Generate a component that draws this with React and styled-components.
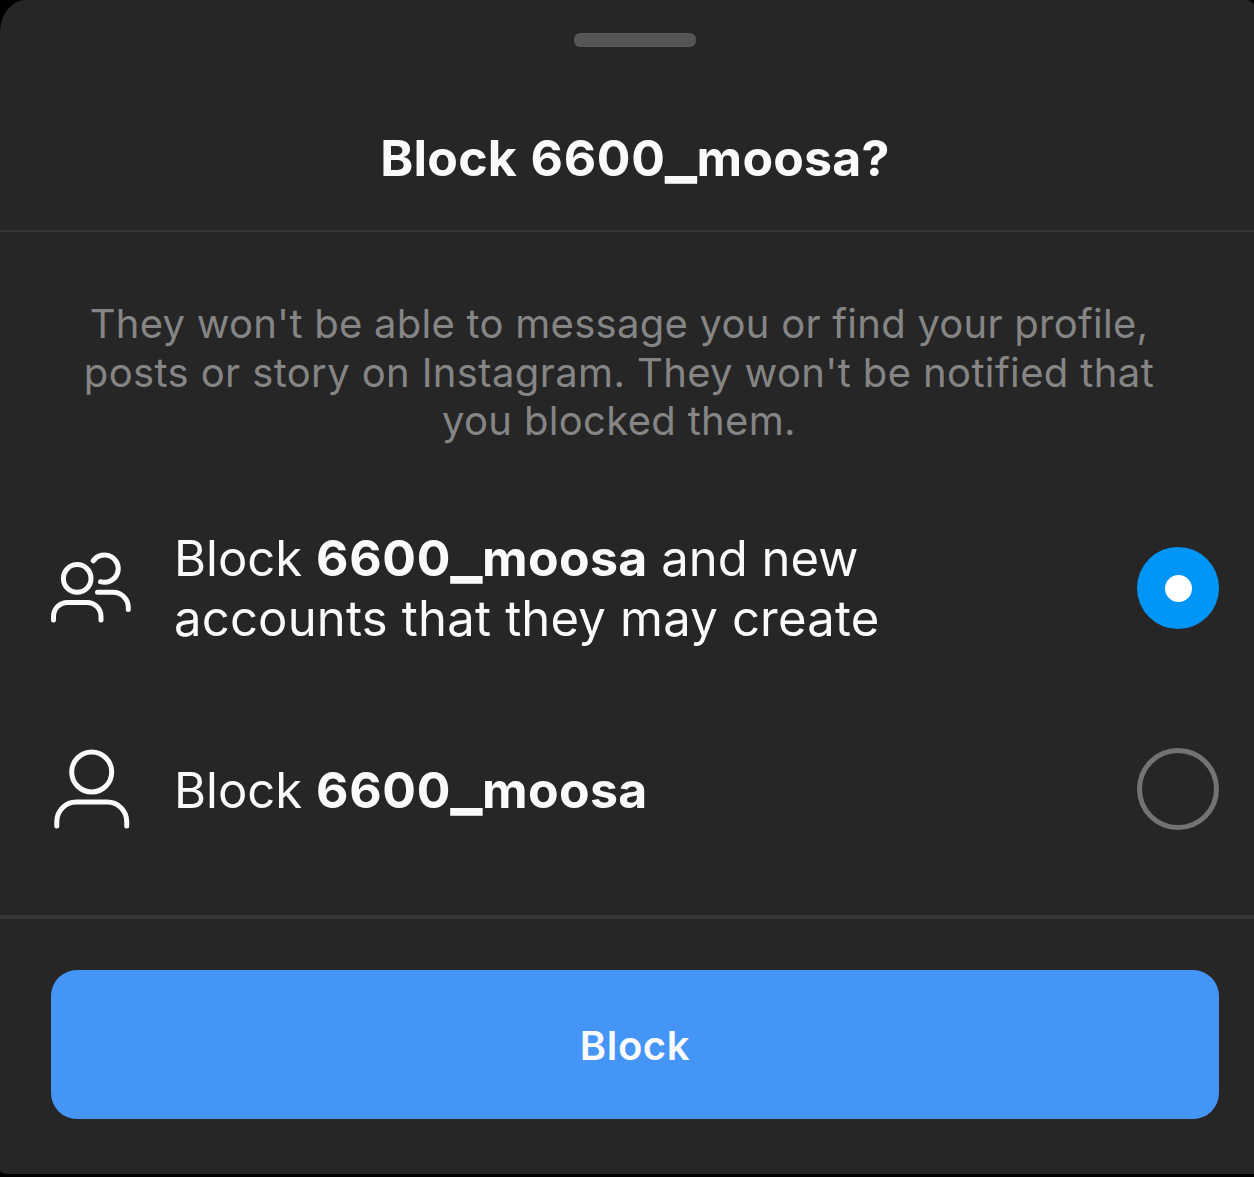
import styled, { createGlobalStyle } from 'styled-components'

const GlobalStyle = createGlobalStyle`
  * { box-sizing: border-box; }
  body { margin: 0; background: #000; font-family: Inter, sans-serif; }
  h1, p { margin: 0; }
`

const Sheet = styled.div`
  width: 1254px;
  height: 1174px;
  overflow: hidden;
  border-radius: 26px 8px 0 8px / 32px 6px 0 4px;
  background: #262626;
  color: #fafafa;
`

const Header = styled.header`
  height: 232px;
  padding: 33px 0 0 16px;
  border-bottom: 2px solid #363636;
  text-align: center;
`

const Handle = styled.div`
  width: 122px;
  height: 14px;
  margin: 0 auto 81px;
  border-radius: 6px;
  background: #555;
`

const Title = styled.h1`
  font-size: 50px;
  line-height: 60px;
  font-weight: 700;
  letter-spacing: 0.2px;
  word-spacing: 1.5px;
  white-space: nowrap;
`

const Digits = styled.span`
  letter-spacing: 0.7px;
`

const Underscore = styled.span`
  margin: 0 -0.5px 0 -1px;
  font-size: 1.36em;
  line-height: 0;
  letter-spacing: 0;
`

const Username = () =>
  <>
    <Digits>6600</Digits><Underscore>_</Underscore>moosa
  </>

const Line = styled.span`
  display: block;
  white-space: nowrap;
  letter-spacing: ${({ $spacing = 0 }) => $spacing}px;
`

const Description = styled.p`
  height: 256px;
  padding: 68px 16px 0 0;
  font-size: 40px;
  line-height: 48.5px;
  text-align: center;
  color: #858585;
`

const Option = styled.div`
  display: flex;
  align-items: center;
  height: ${({ $height }) => $height}px;
  padding: 0 35px 0 48px;
`

const OptionText = styled.div`
  flex: 1;
  margin-left: 40px;
  padding-top: ${({ $offset = 0 }) => $offset}px;
  font-size: 49px;
  line-height: 60px;

  b {
    font-size: 50px;
    font-weight: 700;
    letter-spacing: 0.3px;
  }
`

const Radio = styled.div`
  display: flex;
  align-items: center;
  justify-content: center;
  width: 82px;
  height: 82px;
  border: ${({ $checked }) => ($checked ? 'none' : '5px solid #737373')};
  border-radius: 50%;
  background: ${({ $checked }) => ($checked ? '#0095f6' : 'transparent')};
`

const Dot = styled.div`
  width: 27px;
  height: 27px;
  border-radius: 50%;
  background: #fff;
`

const Footer = styled.footer`
  margin-top: 25px;
  padding: 51px 35px 0 51px;
  border-top: 4px solid #363636;
`

const BlockButton = styled.button`
  display: block;
  width: 100%;
  height: 149px;
  padding: 2px 0 0;
  border: 0;
  border-radius: 26px;
  background: #4595f7;
  color: #fafafa;
  font: 600 40px/48px Inter, sans-serif;
  letter-spacing: 0.6px;
`

const Icon = styled.svg`
  width: 86px;
  height: 86px;
  fill: none;
  stroke: #fafafa;
  stroke-width: 5;
  stroke-linecap: round;
`

const PeopleIcon = () =>
  <Icon viewBox="0 0 86 86">
    <circle cx="29.2" cy="33.4" r="13.8"/>
    <path d="M45.300 15.800a13.700 13.700 0 1 1 7.200 20.900"/>
    <path d="M5.500 75V71.500a14 14 0 0 1 14-14H39a14 14 0 0 1 14 14V75"/>
    <path d="M49.500 47.300H65a15.300 15.300 0 0 1 15.300 15.300v1.800"/>
  </Icon>

const PersonIcon = () =>
  <Icon viewBox="0 0 86 86">
    <circle cx="43.700" cy="26" r="20"/>
    <path d="M8.800 80V75.500a19.500 19.500 0 0 1 19.500-19.500H59.200a19.500 19.500 0 0 1 19.500 19.500V80"/>
  </Icon>

const App = () =>
  <>
    <GlobalStyle/>
    <Sheet>
      <Header>
        <Handle/>
        <Title>Block <Username/>?</Title>
      </Header>
      <Description>
        <Line $spacing={0.26}>They won't be able to message you or find your profile,</Line>
        <Line $spacing={0.38}>posts or story on Instagram. They won't be notified that</Line>
        <Line $spacing={0.33}>you blocked them.</Line>
      </Description>
      <Option $height={200}>
        <PeopleIcon/>
        <OptionText>
          <Line>Block <b><Username/></b> and new</Line>
          <Line $spacing={0.2}>accounts that they may create</Line>
        </OptionText>
        <Radio $checked><Dot/></Radio>
      </Option>
      <Option $height={202}>
        <PersonIcon/>
        <OptionText $offset={2}>
          <Line>Block <b><Username/></b></Line>
        </OptionText>
        <Radio/>
      </Option>
      <Footer>
        <BlockButton>Block</BlockButton>
      </Footer>
    </Sheet>
  </>

export default App
